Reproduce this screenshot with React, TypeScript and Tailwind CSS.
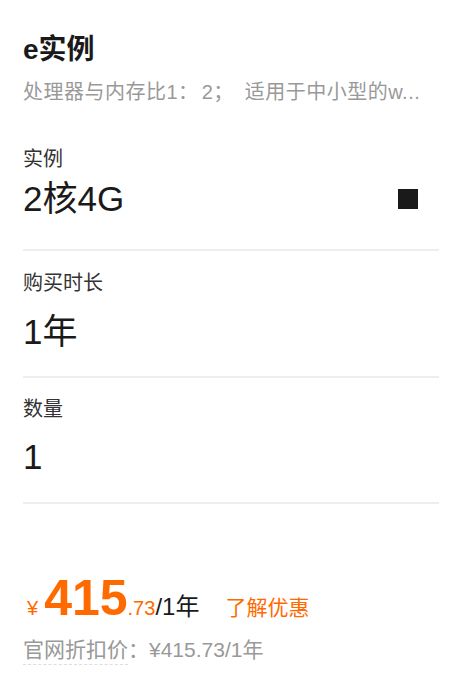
const font = { fontFamily: '"Liberation Sans", "Noto Sans CJK SC", sans-serif' };

function Divider() {
  return <div className="h-[2px] bg-[#eeeeee]" />;
}

function Label({ children }: { children: React.ReactNode }) {
  return <div className="text-[20px] leading-[24px] text-[#333333]">{children}</div>;
}

function Value({ children }: { children: React.ReactNode }) {
  return <span className="text-[35px] leading-[40px] text-[#1a1a1a]">{children}</span>;
}

export default function App() {
  return (
    <div className="h-[680px] w-[470px] overflow-hidden bg-white pl-[23px] pr-[31px]" style={font}>
      {/* header */}
      <div className="pt-[34px] text-[28px] font-bold leading-[32px] text-[#1a1a1a]">e实例</div>
      <div className="mt-[14px] whitespace-nowrap text-[20px] leading-[24px] tracking-[0.5px] text-[#999999]">
        处理器与内存比1：<span className="ml-[3px]" />2；<span className="ml-[11px]" />适用于中小型的w...
      </div>

      {/* instance */}
      <div className="mt-[43px]">
        <Label>实例</Label>
      </div>
      <div className="mt-[8px] flex h-[40px] items-center justify-between">
        <Value>2核4G</Value>
        <span className="mr-[21px] h-[20px] w-[20px] bg-[#1a1a1a]" />
      </div>
      <div className="mt-[30px]">
        <Divider />
      </div>

      {/* duration */}
      <div className="mt-[20px]">
        <Label>购买时长</Label>
      </div>
      <div className="mt-[17px] flex h-[40px] items-center">
        <Value>1年</Value>
      </div>
      <div className="mt-[24px]">
        <Divider />
      </div>

      {/* quantity */}
      <div className="mt-[19px]">
        <Label>数量</Label>
      </div>
      <div className="mt-[16px] flex h-[40px] items-center">
        <Value>1</Value>
      </div>
      <div className="mt-[25px]">
        <Divider />
      </div>

      {/* price */}
      <div className="mt-[69px] flex items-baseline">
        <span className="ml-[4px] mr-[6px] text-[20px] text-[#ff6a00]">¥</span>
        <span className="text-[50px] font-bold leading-[50px] text-[#ff6a00]">415</span>
        <span className="text-[20px] text-[#ff6a00]">.73</span>
        <span className="text-[24px] text-[#1a1a1a]">/1年</span>
        <span className="ml-[26px] text-[21px] text-[#ff6a00]">了解优惠</span>
      </div>
      <div className="mt-[11px] text-[21px] leading-[28px] text-[#999999]">
        <span className="border-b border-dashed border-[#dddddd] pb-[3px]">官网折扣价</span>：¥415.73/1年
      </div>
    </div>
  );
}
